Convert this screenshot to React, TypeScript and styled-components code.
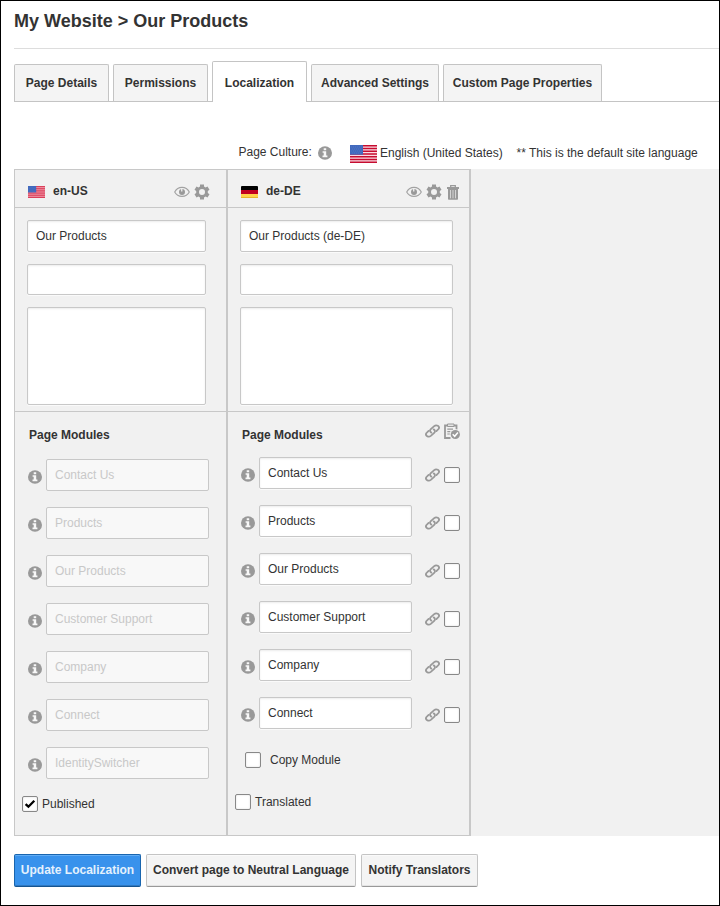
import React from "react";
import styled, { createGlobalStyle } from "styled-components";

const GlobalStyle = createGlobalStyle`
  * { box-sizing: border-box; }
  body { margin: 0; background: #fff; }
  button, input, textarea { font-family: inherit; font-size: inherit; letter-spacing: inherit; }
`;

const Page = styled.main`
  width: 720px;
  height: 906px;
  border: 1px solid #000;
  padding-left: 13px;
  background: #fff;
  color: #333;
  font: 12px/16px "Liberation Sans", Arial, sans-serif;
  overflow: hidden;
`;

const Title = styled.h1`
  height: 48px;
  margin: 0;
  padding-top: 9px;
  border-bottom: 1px solid #ddd;
  font-size: 18px;
  line-height: 22px;
  font-weight: bold;
`;

const Tabs = styled.nav`
  display: flex;
  align-items: flex-end;
  gap: 4px;
  height: 53px;
  border-bottom: 1px solid #c4c4c4;
`;

const Tab = styled.button<{ $width: number; $active?: boolean }>`
  width: ${(p) => p.$width}px;
  height: ${(p) => (p.$active ? 41 : 37)}px;
  margin: 0 0 ${(p) => (p.$active ? -1 : 0)}px;
  padding: ${(p) => (p.$active ? "4px 0 2px" : "0 0 1px")};
  border: 1px solid #c4c4c4;
  border-bottom: 0;
  border-radius: 2px 2px 0 0;
  background: ${(p) => (p.$active ? "#fff" : "#f4f4f4")};
  color: #333;
  font-weight: bold;
  white-space: nowrap;
`;

const Culture = styled.div`
  display: flex;
  height: 67px;
  padding: 42px 0 0 224.5px;
  white-space: nowrap;
  & > svg:nth-of-type(1) { margin: 2px 18px 0 6.5px; }
  & > svg:nth-of-type(2) { margin: 1px 3px 0 0; }
`;

const CultureLabel = styled.span`
  width: 73px;
`;

const CultureName = styled.span`
  width: 136.5px;
  padding-top: 1px;
`;

const CultureNote = styled.span`
  padding-top: 1px;
`;

const Panel = styled.section`
  display: flex;
  height: 667px;
  background: #f1f1f1;
`;

const Column = styled.article<{ $width: number; $right: number }>`
  width: ${(p) => p.$width}px;
  border: 1px solid #c8c8c8;
  border-right-width: ${(p) => p.$right}px;
`;

const ColumnHeader = styled.header`
  display: flex;
  align-items: flex-start;
  height: 38px;
  border-bottom: 1px solid #c8c8c8;
  padding: 13px 0 0 13px;
  & > svg { margin-top: 3px; }
`;

const Locale = styled.strong`
  margin-left: 8px;
  flex: 1;
`;

const Actions = styled.div<{ $right: number }>`
  display: flex;
  align-items: center;
  gap: 4px;
  height: 18px;
  margin-right: ${(p) => p.$right}px;
  & > svg:nth-child(3) { margin-left: 1px; }
`;

const PageFields = styled.div<{ $right: number }>`
  display: flex;
  flex-direction: column;
  height: 204px;
  gap: 12px;
  padding: 12px ${(p) => p.$right}px 6px 12px;
  border-bottom: 1px solid #c8c8c8;
`;

const Field = styled.input<{ $height?: number }>`
  display: block;
  width: 100%;
  height: ${(p) => p.$height ?? 32}px;
  border: 1px solid #c8c8c8;
  border-radius: 2px;
  padding: 0 8px;
  color: #333;
  background: #fff;
  box-shadow: inset 0 1px 2px rgba(0, 0, 0, 0.08), 0 1px 0 #fafafa;
  outline: none;
  &:disabled { color: #c8c8c8; background: #f8f8f8; box-shadow: none; }
`;

const Description = styled.textarea`
  display: block;
  width: 100%;
  height: 98px;
  border: 1px solid #c8c8c8;
  border-radius: 2px;
  resize: none;
  box-shadow: inset 0 1px 2px rgba(0, 0, 0, 0.08), 0 1px 0 #fafafa;
`;

const ModulesHeading = styled.div<{ $height: number }>`
  display: flex;
  justify-content: space-between;
  height: ${(p) => p.$height}px;
  padding: 11px 9px 0 14px;
`;

const HeadingText = styled.strong`
  padding-top: 4px;
`;

const HeadingIcons = styled.div`
  display: flex;
  align-items: flex-start;
  gap: 4px;
  & > svg:first-child { margin-top: 1px; }
`;

const ModuleRow = styled.div<{ $right: number }>`
  display: flex;
  height: 32px;
  margin: 0 ${(p) => p.$right}px 16px 13px;
  & > svg:first-child { flex: none; margin: 11px 4px 0 0; }
`;

const RowTools = styled.div`
  display: flex;
  align-items: center;
  gap: 4px;
  margin: 4px 0 0 13px;
  height: 28px;
`;

const CheckLine = styled.label<{ $left: number; $gap: number; $top: number }>`
  display: flex;
  align-items: center;
  gap: ${(p) => p.$gap}px;
  height: 16px;
  margin: ${(p) => p.$top}px 0 0 ${(p) => p.$left}px;
`;

const Box = styled.span`
  display: flex;
  flex: none;
  align-items: center;
  justify-content: center;
  width: 16px;
  height: 16px;
  border: 1px solid #888;
  border-radius: 2px;
  background: #fff;
  box-shadow: inset 0 0 2px rgba(0, 0, 0, 0.15);
`;

const Footer = styled.footer`
  display: flex;
  gap: 5px;
  padding-top: 18px;
`;

const Action = styled.button<{ $width: number; $primary?: boolean }>`
  width: ${(p) => p.$width}px;
  height: 33px;
  padding: 0 0 1px;
  border: 1px solid ${(p) => (p.$primary ? "#1965ae" : "#c4c4c4")};
  border-bottom-color: ${(p) => (p.$primary ? "#155592" : "#999")};
  border-radius: 2px;
  background: ${(p) => (p.$primary ? "#3892ec" : "#f4f4f4")};
  color: ${(p) => (p.$primary ? "#e4f1fd" : "#333")};
  box-shadow: inset 0 1px 0 ${(p) => (p.$primary ? "#62adf5" : "#fafafa")}, inset 0 -1px 0 ${(p) => (p.$primary ? "#3078c0" : "#e4e4e4")};
  font-weight: bold;
  white-space: nowrap;
`;

const InfoIcon = () => (
  <svg width="14" height="14" viewBox="0 0 14 14" fill="none">
    <ellipse cx="7" cy="7" rx="7" ry="6.7" fill="#999" />
    <path d="M5.7 2.2h2.5v2H5.7zM4.6 5.2h3.6v4.4h1.2v1.6H4.5V9.6h1.2V6.8H4.6z" fill="#f8f8f8" />
  </svg>
);

const EyeIcon = () => (
  <svg width="16" height="12" viewBox="0 0 16 12" fill="none">
    <path d="M.7 6C2.3 2.9 4.8 1.4 8 1.4S13.7 2.9 15.3 6C13.7 9.1 11.2 10.4 8 10.4S2.3 9.1.7 6Z" stroke="#a2a2a2" strokeWidth="1.1" />
    <circle cx="8" cy="5.9" r="3" fill="#999" />
    <path d="M7.1 2.5h1.3v3H7.1z" fill="#f1f1f1" />
  </svg>
);

const GearIcon = () => (
  <svg width="16" height="16" viewBox="0 0 16 16">
    <path
      fill="#999"
      fillRule="evenodd"
      d="M6 .5h4v2.1l1.6.9 1.9-1.1 2 3.4L13.8 7v2l1.7 1.2-2 3.4-1.9-1.1-1.6.9v2.1H6v-2.1l-1.6-.9-1.9 1.1-2-3.4L2.2 9V7L.5 5.8l2-3.4 1.9 1.1L6 2.6ZM8 5a3 3 0 1 0 0 6 3 3 0 0 0 0-6Z"
    />
  </svg>
);

const TrashIcon = () => (
  <svg width="12" height="15" viewBox="0 0 12 15" fill="none">
    <path d="M3.7 2V.7h4.6V2" stroke="#999" strokeWidth="1.3" />
    <path d="M0 2h12v2H0zM1 4h10v10q0 .8-.8.8H1.8Q1 14.8 1 14z" fill="#999" />
    <path d="M3.5 5v8.3M6 5v8.3M8.5 5v8.3" stroke="#d4d4d4" />
  </svg>
);

const LinkIcon = () => (
  <svg width="15" height="14" viewBox="0 0 15 14" fill="none" stroke="#999" strokeWidth="1.8" strokeLinecap="round">
    <path d="M6.3 8.6C4.8 7.8 4.6 6.2 5.8 5.1L9.2 2.1C11.5.2 15.1 2.4 13.7 4.8L11.4 7.1" />
    <path d="M8.7 5.4c1.5.8 1.7 2.4.5 3.5L5.8 11.9C3.5 13.8-.1 11.6 1.3 9.2L3.6 6.9" />
  </svg>
);

const ClipboardIcon = () => (
  <svg width="16" height="17" viewBox="0 0 16 17" fill="none">
    <path d="M6.5 15H1V2.5h11.5v4" stroke="#999" strokeWidth="1.8" />
    <path d="M3.5 3.5V1H10v2.5z" fill="#e4e4e4" stroke="#999" />
    <path d="M3.3 6.2H9M3.3 8.6h3M3.3 11h2.5" stroke="#999" strokeWidth="1.2" />
    <circle cx="11.3" cy="11.5" r="5.2" fill="#f1f1f1" />
    <circle cx="11.3" cy="11.5" r="4.6" fill="#999" />
    <path d="m8.7 11.3 2 2 3.2-3.7" stroke="#fff" strokeWidth="1.5" />
  </svg>
);

const TickIcon = () => (
  <svg width="12" height="10" viewBox="0 0 12 10">
    <path d="m1.6 5.2 2.8 2.5 5.9-6" fill="none" stroke="#000" strokeWidth="2.3" />
  </svg>
);

const UsFlag = ({ width, height, stripe, pale }: { width: number; height: number; stripe: string; pale: string }) => (
  <svg width={width} height={height} viewBox="0 0 27 18" preserveAspectRatio="none">
    <path d="M0 0h27v18H0z" fill={pale} />
    <path d="M0 .7h27M0 3.5h27M0 6.3h27M0 9h27M0 11.8h27M0 14.6h27M0 17.3h27" stroke={stripe} strokeWidth="1.5" />
    <path d="M0 0h13v9.7H0z" fill="#4169bd" />
    <path d="M1 2h11M2 4h10M1 6h11M2 8h10" stroke="#5a7fcc" strokeWidth=".6" strokeDasharray="1 1" />
  </svg>
);

const DeFlag = () => (
  <svg width="17" height="12" viewBox="0 0 17 12">
    <rect width="17" height="12" rx="1" fill="#000" />
    <path d="M0 4h17v4H0z" fill="#c1001f" />
    <path d="M0 8h17v3.5q0 .5-.5.5H.5Q0 12 0 11.5z" fill="#ffd34b" />
    <path d="M0 11h17v1H0z" fill="#e7b42c" />
  </svg>
);

const modules = ["Contact Us", "Products", "Our Products", "Customer Support", "Company", "Connect"];

const tabs = [
  { label: "Page Details", width: 95 },
  { label: "Permissions", width: 95 },
  { label: "Localization", width: 95, active: true },
  { label: "Advanced Settings", width: 128 },
  { label: "Custom Page Properties", width: 159 },
];

export default function App() {
  return (
    <>
      <GlobalStyle />
      <Page>
        <Title>My Website &gt; Our Products</Title>
        <Tabs>
          {tabs.map((t) => (
            <Tab key={t.label} $width={t.width} $active={t.active}>{t.label}</Tab>
          ))}
        </Tabs>
        <Culture>
          <CultureLabel>Page Culture:</CultureLabel>
          <InfoIcon />
          <UsFlag width={27} height={18} stripe="#c60c30" pale="#fbdde5" />
          <CultureName>English (United States)</CultureName>
          <CultureNote>** This is the default site language</CultureNote>
        </Culture>
        <Panel>
          <Column $width={213} $right={1}>
            <ColumnHeader>
              <UsFlag width={17} height={12} stripe="#d83a55" pale="#f29bab" />
              <Locale>en-US</Locale>
              <Actions $right={16}>
                <EyeIcon />
                <GearIcon />
              </Actions>
            </ColumnHeader>
            <PageFields $right={20}>
              <Field defaultValue="Our Products" />
              <Field $height={31} />
              <Description />
            </PageFields>
            <ModulesHeading $height={47}>
              <HeadingText>Page Modules</HeadingText>
            </ModulesHeading>
            {[...modules, "IdentitySwitcher"].map((name) => (
              <ModuleRow key={name} $right={17}>
                <InfoIcon />
                <Field defaultValue={name} disabled />
              </ModuleRow>
            ))}
            <CheckLine $left={7} $gap={4} $top={17}>
              <Box><TickIcon /></Box>
              Published
            </CheckLine>
          </Column>
          <Column $width={244} $right={2}>
            <ColumnHeader>
              <DeFlag />
              <Locale>de-DE</Locale>
              <Actions $right={10}>
                <EyeIcon />
                <GearIcon />
                <TrashIcon />
              </Actions>
            </ColumnHeader>
            <PageFields $right={16}>
              <Field defaultValue="Our Products (de-DE)" />
              <Field $height={31} />
              <Description />
            </PageFields>
            <ModulesHeading $height={45}>
              <HeadingText>Page Modules</HeadingText>
              <HeadingIcons>
                <LinkIcon />
                <ClipboardIcon />
              </HeadingIcons>
            </ModulesHeading>
            {modules.map((name) => (
              <ModuleRow key={name} $right={9}>
                <InfoIcon />
                <Field defaultValue={name} />
                <RowTools>
                  <LinkIcon />
                  <Box />
                </RowTools>
              </ModuleRow>
            ))}
            <CheckLine $left={17} $gap={9} $top={23}>
              <Box />
              Copy Module
            </CheckLine>
            <CheckLine $left={7} $gap={4} $top={26}>
              <Box />
              Translated
            </CheckLine>
          </Column>
        </Panel>
        <Footer>
          <Action $width={127} $primary>Update Localization</Action>
          <Action $width={210}>Convert page to Neutral Language</Action>
          <Action $width={117}>Notify Translators</Action>
        </Footer>
      </Page>
    </>
  );
}
